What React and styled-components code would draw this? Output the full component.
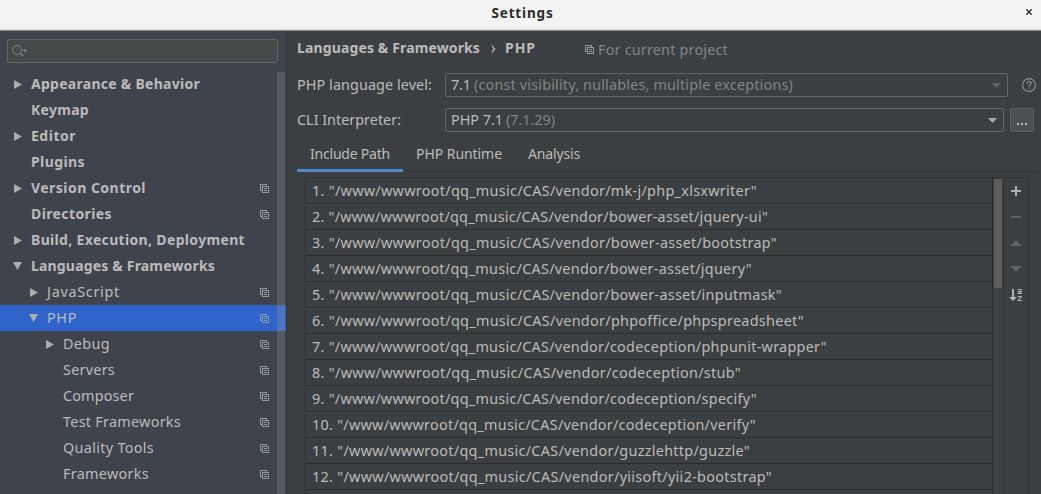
import React, { useLayoutEffect, useRef, useState } from "react";
import styled, { createGlobalStyle, css } from "styled-components";

const GlobalStyle = createGlobalStyle`
  * { box-sizing: border-box; }
  html, body { margin: 0; padding: 0; overflow: hidden; background: #3c3f41; }
  body { font-family: "Noto Sans", "Open Sans", sans-serif; font-size: 14.4px; color: #bbbbbb; }
`;

const Window = styled.div`
  width: 1041px;
  height: 494px;
  display: flex;
  flex-direction: column;
  overflow: hidden;
`;

const TitleBar = styled.header`
  position: relative;
  flex: none;
  height: 31px;
  padding: 0 0 5px 4px;
  display: flex;
  align-items: center;
  justify-content: center;
  background: #f3f3f3;
  border-bottom: 1px solid #8e8f8a;
  box-shadow: inset 0 -1px 0 #dcdcd9;
  color: #2b2b2b;
  font-weight: 700;
  font-size: 13.5px;
`;

const CloseButton = styled.svg`
  position: absolute;
  right: 9px;
  top: 9px;
  width: 6px;
  height: 6px;
`;

const Body = styled.div`
  flex: 1;
  min-height: 0;
  display: flex;
`;

const Sidebar = styled.aside`
  flex: none;
  width: 287px;
  display: flex;
  flex-direction: column;
  background: #3f434c;
  border-right: 1px solid #323436;
`;

const SearchBox = styled.div`
  flex: none;
  width: 271px;
  height: 24px;
  margin: 8px 0 8px 7px;
  padding-left: 4px;
  display: flex;
  align-items: center;
  background: #45494a;
  border: 1px solid #646464;
  border-radius: 2px;
`;

const TreeArea = styled.div`
  position: relative;
  flex: 1;
  min-height: 0;
  overflow: hidden;
`;

const TreeScrollbar = styled.div`
  position: absolute;
  top: 1px;
  right: 1px;
  bottom: 0;
  width: 8px;
  background: rgba(166, 160, 160, 0.25);
`;

const TreeRow = styled.div`
  height: 26px;
  padding-left: ${(p) => 10 + p.$level * 16}px;
  padding-right: 17px;
  display: flex;
  align-items: center;
  font-weight: ${(p) => (p.$level === 0 ? 700 : 400)};
  font-size: ${(p) => (p.$level === 0 ? 14 : 14.4)}px;
  ${(p) => p.$selected && css`background: #2f65ca;`}
`;

const ArrowSlot = styled.span`
  flex: none;
  width: 21px;
  height: 26px;
  display: flex;
  align-items: center;
  svg { display: block; margin-left: 3px; }
`;

const RowLabel = styled.span`
  flex: 1;
  line-height: 26px;
`;

const Main = styled.main`
  flex: 1;
  min-width: 0;
  padding-left: 10px;
  display: flex;
  flex-direction: column;
`;

const Breadcrumb = styled.div`
  height: 34px;
  flex: none;
  display: flex;
  align-items: center;
  padding-bottom: 1px;
  font-weight: 700;
  font-size: 14px;
`;

const Chevron = styled.svg`
  width: 5px;
  height: 8px;
  margin: 2px 9px 0 11px;
`;

const Scope = styled.div`
  display: flex;
  align-items: center;
  gap: 4px;
  margin-left: 49px;
  padding-top: 4px;
  color: #828486;
  font-weight: 400;
  font-size: 14.4px;
`;

const FormRow = styled.div`
  flex: none;
  display: flex;
  align-items: center;
  height: 24px;
  margin-top: ${(p) => p.$top}px;
`;

const FieldLabel = styled.label`
  flex: none;
  width: 148px;
  padding-bottom: 1px;
`;

const Combo = styled.div`
  flex: none;
  width: ${(p) => p.$width}px;
  height: 24px;
  padding: 0 6px 0 5px;
  display: flex;
  align-items: center;
  border: 1px solid #646566;
  border-radius: 2px;
  line-height: 22px;
  svg { margin-left: auto; }
`;

const Muted = styled.span`
  color: #828486;
  margin-left: 3px;
`;

const MoreButton = styled.button`
  width: 24px;
  height: 24px;
  margin-left: 6px;
  padding: 0 0 6px;
  display: flex;
  align-items: flex-end;
  justify-content: center;
  gap: 2px;
  background: #4c5052;
  border: 1px solid #5e6060;
  border-radius: 2px;
  box-shadow: 0 1px 0 #353739;
`;

const Dot = styled.i`
  width: 2px;
  height: 2px;
  background: #bbbbbb;
`;

const HelpIcon = styled.svg`
  width: 14px;
  height: 14px;
  margin-left: 14px;
`;

const Tabs = styled.nav`
  flex: none;
  display: flex;
  width: 740px;
  height: 32px;
  margin-top: 8px;
  border-bottom: 1px solid #323232;
`;

const Tab = styled.div`
  height: 32px;
  padding: 0 13px;
  display: flex;
  align-items: center;
  font-size: 14px;
  padding-bottom: 6px;
  ${(p) => p.$active && css`box-shadow: inset 0 -3px 0 #4a88c7;`}
`;

const Panel = styled.section`
  flex: 1;
  min-height: 0;
  width: 724px;
  margin: 5px 0 0 8px;
  display: flex;
  border: 1px solid #323232;
  border-bottom: 0;
`;

const PathList = styled.ol`
  flex: 1;
  margin: 0;
  padding: 0;
  list-style: none;
  overflow: hidden;
  border-right: 1px solid #2b2b2b;
`;

const PathRow = styled.li`
  height: 26px;
  padding-left: 6px;
  line-height: 25px;
  border-bottom: 1px solid #2b2b2b;
`;

const ListScrollbar = styled.div`
  flex: none;
  width: 10px;
  padding: 1px;
  background: #3e4143;
`;

const Thumb = styled.div`
  width: 8px;
  height: 109px;
  background: #5b5d5e;
`;

const Toolbar = styled.div`
  flex: none;
  width: 25px;
  border-left: 1px solid #323232;
  display: flex;
  flex-direction: column;
  align-items: center;
`;

const Tool = styled.div`
  width: 24px;
  height: 26px;
  svg { display: block; }
`;

const Fitted = styled.span`
  display: inline-block;
  white-space: pre;
`;

/* Tracks the label so that it fills the given width. */
function Label({ width, children }) {
  const ref = useRef(null);
  const [spacing, setSpacing] = useState(0);
  useLayoutEffect(() => {
    const natural = ref.current.getBoundingClientRect().width;
    setSpacing((width - natural) / children.length);
  }, [width, children]);
  return (
    <Fitted ref={ref} style={{ letterSpacing: spacing }}>
      {children}
    </Fitted>
  );
}

const CopyIcon = () => (
  <svg width="9" height="9" viewBox="0 0 9 9" fill="#8f9ba3" fillRule="evenodd" shapeRendering="crispEdges">
    <path d="M0 0h7v2H6V1H1v5h1v1H0z" />
    <path d="M2 2h7v7H2zM3 3v5h5V3z" />
    <path d="M4 4h3v1H4zM4 6h3v1H4z" />
  </svg>
);

const TreeArrow = ({ open }) =>
  open ? (
    <svg width="9" height="8" viewBox="0 0 9 8"><path d="M0 0h9L4.5 8z" fill="#adadad" /></svg>
  ) : (
    <svg width="9" height="9" viewBox="0 0 9 9"><path d="M1 0v9l8-4.5z" fill="#adadad" /></svg>
  );

const ComboArrow = ({ color }) => (
  <svg width="9" height="5" viewBox="0 0 9 5"><path d="M0 0h9L4.5 5z" fill={color} /></svg>
);

const SearchIcon = () => (
  <svg width="16" height="14" viewBox="0 0 16 14" fill="none" stroke="#7b868b">
    <circle cx="5" cy="6" r="4.5" />
    <path d="M8.3 9.3l3 3" strokeWidth="1.4" />
    <path d="M10.5 5.5h5L13 8.5z" fill="#7b868b" stroke="none" />
  </svg>
);

const tree = [
  { text: "Appearance & Behavior", w: 169, level: 0, arrow: "closed" },
  { text: "Keymap", w: 58, level: 0 },
  { text: "Editor", w: 45, level: 0, arrow: "closed" },
  { text: "Plugins", w: 54, level: 0 },
  { text: "Version Control", w: 115, level: 0, arrow: "closed", copy: true },
  { text: "Directories", w: 81, level: 0, copy: true },
  { text: "Build, Execution, Deployment", w: 214, level: 0, arrow: "closed" },
  { text: "Languages & Frameworks", w: 184, level: 0, arrow: "open" },
  { text: "JavaScript", w: 73, level: 1, arrow: "closed", copy: true },
  { text: "PHP", w: 30, level: 1, arrow: "open", copy: true, selected: true },
  { text: "Debug", w: 47, level: 2, arrow: "closed", copy: true },
  { text: "Servers", w: 52, level: 2, copy: true },
  { text: "Composer", w: 71, level: 2, copy: true },
  { text: "Test Frameworks", w: 118, level: 2, copy: true },
  { text: "Quality Tools", w: 91, level: 2, copy: true },
  { text: "Frameworks", w: 86, level: 2, copy: true },
  { text: "Phing", w: 40, level: 2, copy: true },
];

const paths = [
  ["mk-j/php_xlsxwriter", 445],
  ["bower-asset/jquery-ui", 456],
  ["bower-asset/bootstrap", 465],
  ["bower-asset/jquery", 440],
  ["bower-asset/inputmask", 470],
  ["phpoffice/phpspreadsheet", 492],
  ["codeception/phpunit-wrapper", 515],
  ["codeception/stub", 429],
  ["codeception/specify", 445],
  ["codeception/verify", 444],
  ["guzzlehttp/guzzle", 438],
  ["yiisoft/yii2-bootstrap", 460],
];

export default function App() {
  return (
    <Window>
      <GlobalStyle />
      <TitleBar>
        <Label width={62}>Settings</Label>
        <CloseButton viewBox="0 0 6 6" stroke="#333" strokeWidth="1.5">
          <path d="M.3.3l5.4 5.4M5.7.3L.3 5.7" />
        </CloseButton>
      </TitleBar>
      <Body>
        <Sidebar>
          <SearchBox><SearchIcon /></SearchBox>
          <TreeArea>
            {tree.map((n) => (
              <TreeRow key={n.text} $level={n.level} $selected={n.selected}>
                <ArrowSlot>{n.arrow && <TreeArrow open={n.arrow === "open"} />}</ArrowSlot>
                <RowLabel><Label width={n.w}>{n.text}</Label></RowLabel>
                {n.copy && <CopyIcon />}
              </TreeRow>
            ))}
            <TreeScrollbar />
          </TreeArea>
        </Sidebar>
        <Main>
          <Breadcrumb>
            <Label width={183}>{"Languages & Frameworks"}</Label>
            <Chevron viewBox="0 0 5 8" fill="none" stroke="#bbb" strokeWidth="1.2">
              <path d="M1 .5Q2.2 2.8 3.6 4 2.2 5.2 1 7.5" />
            </Chevron>
            <Label width={31}>PHP</Label>
            <Scope><CopyIcon /><Label width={130}>For current project</Label></Scope>
          </Breadcrumb>
          <FormRow $top={8}>
            <FieldLabel><Label width={135}>PHP language level:</Label></FieldLabel>
            <Combo $width={563}>
              <Label width={20}>7.1</Label>
              <Muted><Label width={319}>(const visibility, nullables, multiple exceptions)</Label></Muted>
              <ComboArrow color="#616263" />
            </Combo>
            <HelpIcon viewBox="0 0 14 14" fill="none" stroke="#87939a">
              <circle cx="7" cy="7" r="6.4" strokeWidth="1.1" />
              <path d="M5 5.6C5 4.3 5.8 3.6 7 3.6s2 .7 2 1.8C9 6.8 7 6.9 7 8.4M7 9.5v1.3" strokeWidth="1.2" />
            </HelpIcon>
          </FormRow>
          <FormRow $top={11}>
            <FieldLabel><Label width={104}>CLI Interpreter:</Label></FieldLabel>
            <Combo $width={559}>
              <Label width={52}>PHP 7.1</Label>
              <Muted><Label width={49}>(7.1.29)</Label></Muted>
              <ComboArrow color="#a9abad" />
            </Combo>
            <MoreButton><Dot /><Dot /><Dot /></MoreButton>
          </FormRow>
          <Tabs>
            <Tab $active><Label width={80}>Include Path</Label></Tab>
            <Tab><Label width={86}>PHP Runtime</Label></Tab>
            <Tab><Label width={52}>Analysis</Label></Tab>
          </Tabs>
          <Panel>
            <PathList>
              {paths.map(([p, w], i) => (
                <PathRow key={p}>
                  <Label width={w}>{`${i + 1}. "/www/wwwroot/qq_music/CAS/vendor/${p}"`}</Label>
                </PathRow>
              ))}
            </PathList>
            <ListScrollbar><Thumb /></ListScrollbar>
            <Toolbar>
              <Tool>
                <svg width="24" height="26" viewBox="0 0 24 26"><path d="M7 12h10v2H7zM11 8h2v10h-2z" fill="#afb1b3" /></svg>
              </Tool>
              <Tool>
                <svg width="24" height="26" viewBox="0 0 24 26"><path d="M7 12h10v2H7z" fill="#606162" /></svg>
              </Tool>
              <Tool>
                <svg width="24" height="26" viewBox="0 0 24 26"><path d="M6 16h12l-6-6z" fill="#606162" /></svg>
              </Tool>
              <Tool>
                <svg width="24" height="26" viewBox="0 0 24 26"><path d="M6 10h12l-6 6z" fill="#606162" /></svg>
              </Tool>
              <Tool>
                <svg width="24" height="26" viewBox="0 0 24 26" fill="none" stroke="#afb1b3">
                  <path d="M9 7v9" strokeWidth="2" />
                  <path d="M5 15h8l-4 4z" fill="#afb1b3" stroke="none" />
                  <path d="M13.8 7.5h3.2v4.5M17 9.6h-2.7v1.9h2.9M13.8 14.5h3.4l-3 4h3.6" strokeWidth="1.1" />
                </svg>
              </Tool>
            </Toolbar>
          </Panel>
        </Main>
      </Body>
    </Window>
  );
}
